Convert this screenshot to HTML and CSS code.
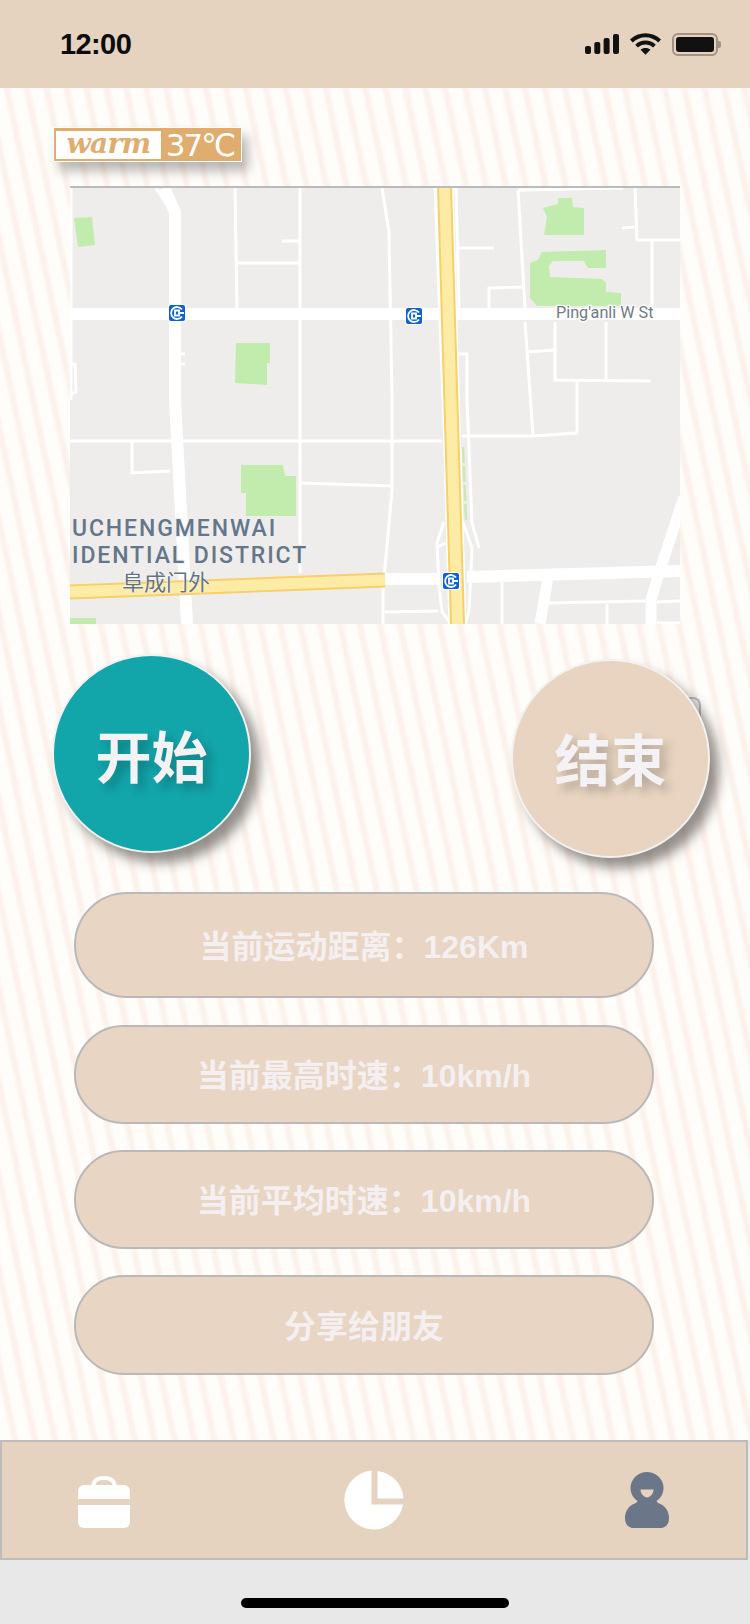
FILE: index.html
```html
<!DOCTYPE html>
<html lang="zh-CN">
<head>
<meta charset="utf-8">
<title>warm37°C</title>
<link rel="stylesheet" href="styles.css">
</head>
<body>
<div class="screen">
  <header class="status">
    <span class="time">12:00</span>
    <div class="status-icons">
      <svg class="ic-signal" viewBox="0 0 34 20"><rect x="0" y="12" width="6" height="8" rx="2"/><rect x="9.3" y="8" width="6" height="12" rx="2"/><rect x="18.6" y="4" width="6" height="16" rx="2"/><rect x="28" y="0" width="6" height="20" rx="2"/></svg>
      <svg class="ic-wifi" viewBox="0 0 32 22"><path d="M16 0C10 0 4.500 2.300 0 6.400L2.800 9.500C6.400 6.100 11 4.100 16 4.100S25.600 6.100 29.200 9.500L32 6.400C27.500 2.300 22 0 16 0Z"/><path d="M16 7.400C12 7.400 8.400 8.900 5.400 11.700L8.200 14.700C10.300 12.800 13 11.600 16 11.600S21.700 12.800 23.800 14.700L26.600 11.700C23.600 8.900 20 7.400 16 7.400Z"/><path d="M16 15C14 15 12.300 15.700 10.900 16.900L16 22L21.100 16.900C19.700 15.700 18 15 16 15Z"/></svg>
      <div class="battery"><div class="battery-fill"></div></div>
    </div>
  </header>

  <main class="main">
    <div class="logo"><span class="logo-warm">warm</span><span class="logo-temp">37℃</span></div>

    <svg class="map" viewBox="70 188 610 436">
      <rect class="m-bg" x="70" y="186" width="610" height="438"/>
      <g class="m-park">
        <polygon points="74,218 92,217 95,245 78,247"/>
        <polygon points="236,343 270,343 270,363 267,363 267,385 235,383"/>
        <polygon points="558,198 572,198 573,207 584,208 584,235 544,235 547,217 543,208 558,204"/>
        <polygon points="542,252 606,250 606,268 588,268 584,261 553,261 549,266 550,277 602,279 606,283 606,292 621,293 621,306 537,306 530,298 530,263 538,260"/>
        <polygon points="241,465 283,465 285,476 296,476 296,516 246,516 246,493 241,493"/>
        <rect x="70" y="618" width="26" height="6"/>
      </g>
      <g class="m-dash">
        <path d="M463 447L466 520"/>
      </g>
      <g class="m-road">
        <path d="M71 188V400"/>
        <path d="M70 364H75L76 392L70 394"/>
        <path d="M235 188L237 308"/>
        <path d="M300 188V573"/>
        <path d="M238 263H300"/>
        <path d="M282 241H300"/>
        <path d="M180 354H185M180 364H185"/>
        <path d="M70 441H442"/>
        <path d="M132 441V473L170 471"/>
        <path d="M300 483L392 486"/>
        <path d="M382 188L389 232L392 400V490L383 590V624"/>
        <path d="M435 188L443 400"/>
        <path d="M456 248H494"/>
        <path d="M458 354H467V400L472 523L479 548"/>
        <path d="M456 188L459 308"/>
        <path d="M518 190L525 308"/>
        <path d="M518 190L623 188"/>
        <path d="M635 188L637 240H680"/>
        <path d="M652 241V308"/>
        <path d="M622 228L637 227"/>
        <path d="M489 308V288L523 287"/>
        <path d="M525 322L533 436"/>
        <path d="M527 352L555 350"/>
        <path d="M555 322V380L651 381"/>
        <path d="M606 322V380"/>
        <path d="M577 380V433"/>
        <path d="M462 436H533L577 433"/>
        <path d="M502 581V624"/>
        <path d="M548 603L645 601"/>
        <path d="M607 604V624"/>
        <path d="M657 602L680 601"/>
        <path d="M657 623H680"/>
        <path d="M385 612L438 611"/>
        <path d="M444 522L437 543L439 585L442 612L451 624"/>
        <path d="M463 522L472 548L469 612L465 624"/>
        <path d="M437 547L446 543"/>
        <path d="M156 188L170 210"/>
      </g>
      <g class="m-main">
        <path d="M70 314H680"/>
        <path d="M164 188L175 212L175 400L187 624"/>
        <path d="M385 579L440 579"/>
        <path d="M467 577L680 571"/>
      </g>
      <g class="m-wide">
        <path d="M684 497L661 567L651 600V624"/>
        <path d="M548 577L540 624"/>
      </g>
      <path class="hw-edge" d="M70 592L385 580"/>
      <path class="hw-fill" d="M70 592L385 580"/>
      <path class="hw-halo" d="M444.500 186L457.500 624"/>
      <path class="hw-edge" d="M444.500 186L457.500 624"/>
      <path class="hw-fill" d="M444.500 186L457.500 624"/>

      <g class="metro" transform="translate(177 313)">
        <rect class="mt-bg" x="-9" y="-9" width="18" height="18" rx="3"/>
        <rect class="mt-blue" x="-8" y="-8" width="16" height="16" rx="2"/>
        <path class="mt-ring" d="M5 -3.500A6 6 0 1 0 5 3.500M-2 -2.500H2V2.500H-2ZM2 0H7"/>
      </g>
      <g class="metro" transform="translate(414 316)">
        <rect class="mt-bg" x="-9" y="-9" width="18" height="18" rx="3"/>
        <rect class="mt-blue" x="-8" y="-8" width="16" height="16" rx="2"/>
        <path class="mt-ring" d="M5 -3.500A6 6 0 1 0 5 3.500M-2 -2.500H2V2.500H-2ZM2 0H7"/>
      </g>
      <g class="metro" transform="translate(451 581)">
        <rect class="mt-bg" x="-9" y="-9" width="18" height="18" rx="3"/>
        <rect class="mt-blue" x="-8" y="-8" width="16" height="16" rx="2"/>
        <path class="mt-ring" d="M5 -3.500A6 6 0 1 0 5 3.500M-2 -2.500H2V2.500H-2ZM2 0H7"/>
      </g>

      <text class="m-label-road" x="556" y="318">Ping'anli W St</text>
      <text class="m-label-dist" x="72" y="536">UCHENGMENWAI</text>
      <text class="m-label-dist" x="72" y="563">IDENTIAL DISTRICT</text>
      <text class="m-label-cn" x="122" y="590">阜成门外</text>
    </svg>

    <div class="actions">
      <button class="round round-start">开始</button>
      <div class="end-wrap">
        <div class="behind"></div>
        <button class="round round-end">结束</button>
      </div>
    </div>

    <div class="pills">
      <div class="pill pill-a">当前运动距离：126Km</div>
      <div class="pill pill-b">当前最高时速：10km/h</div>
      <div class="pill pill-b">当前平均时速：10km/h</div>
      <div class="pill pill-c">分享给朋友</div>
    </div>
  </main>

  <nav class="tabs">
    <svg class="tab-bag" viewBox="0 0 52 52">
      <path class="bag-handle" d="M15.500 10V9.500C15.500 4.800 19.500 2 26 2S36.500 4.800 36.500 9.500V10"/>
      <path class="tab-white" d="M6 9H46A6 6 0 0 1 52 15V23H0V15A6 6 0 0 1 6 9Z"/>
      <path class="tab-white" d="M0 29H52V46A6 6 0 0 1 46 52H6A6 6 0 0 1 0 46Z"/>
    </svg>
    <svg class="tab-pie" viewBox="0 0 60 60">
      <path class="tab-white" d="M27.500 0.500A29.500 29.500 0 1 0 59 34.500H27.500Z"/>
      <path class="tab-white" d="M33.500 1A29.500 29.500 0 0 1 59.500 28.500H33.500Z"/>
    </svg>
    <svg class="tab-user" viewBox="0 0 44 56">
      <ellipse class="user-fill" cx="22" cy="16" rx="16.500" ry="16"/>
      <path class="user-fill" d="M15 26H29L33 31C40 33 44 39 44 46C44 53 40 56 35 56H9C4 56 0 53 0 46C0 39 4 33 11 31Z"/>
      <path class="user-notch" d="M15.500 17.500H28.500C28.500 22 25 25 22 25.500C19 25 15.500 22 15.500 17.500Z"/>
    </svg>
  </nav>

  <footer class="home"><div class="home-bar"></div></footer>
</div>
</body>
</html>
```
FILE: styles.css
```css
* { box-sizing: border-box; }
html, body { margin: 0; padding: 0; }
body { font-family: "Liberation Sans", "Noto Sans CJK SC", sans-serif; }

.screen {
  width: 750px;
  height: 1624px;
  display: flex;
  flex-direction: column;
  overflow: hidden;
  background: #e8e8e8;
}

/* status bar */
.status {
  height: 88px;
  flex: none;
  background: #e6d3bf;
  display: flex;
  justify-content: space-between;
  align-items: center;
  padding: 0 30px 0 60px;
}
.time { font-size: 29px; font-weight: 700; letter-spacing: -.6px; color: #0c0c0c; }
.status-icons { display: flex; align-items: center; gap: 11px; }
.ic-signal { width: 34px; height: 20px; fill: #111; }
.ic-wifi { width: 31px; height: 22px; fill: #111; }
.battery {
  width: 46px;
  height: 23px;
  margin-right: 2px;
  border: 2px solid #a39384;
  border-radius: 6px;
  padding: 2px;
  position: relative;
}
.battery::after {
  content: "";
  position: absolute;
  right: -5px;
  top: 6px;
  width: 3px;
  height: 7px;
  border-radius: 0 2px 2px 0;
  background: #a39384;
}
.battery-fill { width: 100%; height: 100%; background: #111; border-radius: 3px; }

/* striped page */
.main {
  flex: none;
  height: 1352px;
  background:
    repeating-linear-gradient(78deg,
      #fffdf9 0, #fffdf9 10px,
      #fcf2eb 13px, #fcf2eb 16px,
      #fffdf9 19.500px);
  overflow: hidden;
}

/* logo */
.logo {
  width: 189px;
  height: 35px;
  margin: 39px 0 0 53px;
  display: flex;
  align-items: center;
  padding: 2px 2px;
  background: #e0ad6e;
  border: 1px solid #fff;
  box-shadow: 6px 9px 12px rgba(0, 0, 0, .28);
}
.logo-warm {
  width: 105px;
  height: 28px;
  flex: none;
  background: #fff;
  color: #e0ad6e;
  font-family: "DejaVu Serif", serif;
  font-style: italic;
  font-weight: 700;
  font-size: 28px;
  line-height: 25px;
  letter-spacing: -.6px;
  text-align: center;
}
.logo-temp {
  flex: 1;
  color: #fff;
  font-family: "DejaVu Sans", sans-serif;
  font-size: 31px;
  line-height: 30px;
  letter-spacing: -2px;
  text-align: center;
  white-space: nowrap;
}

/* map */
.map {
  display: block;
  width: 610px;
  height: 438px;
  margin: 24px 0 0 70px;
  border-top: 2px solid #bbb;
}
.m-bg { fill: #eeedeb; }
.m-park polygon, .m-park rect { fill: #c1ecae; }
.m-dash path { fill: none; stroke: #c9eab8; stroke-width: 2.500; stroke-dasharray: 16 3; }
.m-road path { fill: none; stroke: #fff; stroke-width: 3; }
.m-main path { fill: none; stroke: #fff; stroke-width: 12; }
.m-wide path { fill: none; stroke: #fff; stroke-width: 11; }
.hw-halo { fill: none; stroke: #fff; stroke-width: 18; }
.hw-edge { fill: none; stroke: #f9cf69; stroke-width: 15; }
.hw-fill { fill: none; stroke: #feeca6; stroke-width: 11; }
.mt-bg { fill: #fff; }
.mt-blue { fill: #0b62d6; }
.mt-ring { fill: none; stroke: #fff; stroke-width: 1.800; }
.m-label-road {
  font-family: Roboto, sans-serif;
  font-size: 16.200px;
  fill: #6f7a84;
  stroke: #fff;
  stroke-width: 2.500px;
  paint-order: stroke;
}
.m-label-dist {
  font-family: Roboto, sans-serif;
  font-size: 23px;
  font-weight: 500;
  letter-spacing: 1.900px;
  fill: #64768c;
  stroke: #eeedeb;
  stroke-width: 2px;
  paint-order: stroke;
}
.m-label-cn {
  font-family: "Noto Sans CJK SC", sans-serif;
  font-size: 22px;
  font-weight: 400;
  fill: #66727f;
  stroke: #fff;
  stroke-width: 1px;
  paint-order: stroke;
}

/* round buttons */
.actions {
  display: flex;
  justify-content: space-between;
  align-items: flex-start;
  margin-top: 30px;
  padding: 0 40px 0 52px;
}
.round {
  display: block;
  width: 199px;
  height: 199px;
  padding: 0;
  border: 2px solid #f2f2f2;
  border-radius: 50%;
  box-shadow: 9px 10px 12px rgba(60, 55, 50, .55);
  font-family: "Noto Sans CJK SC", sans-serif;
  font-size: 56px;
  font-weight: 700;
  color: #f4f2f5;
  text-shadow: 6px 6px 10px rgba(0, 0, 0, .22);
}
.round-start { background: #12a5aa; }
.round-end { background: #e8d4c0; position: relative; padding-bottom: 5px; }
.end-wrap { position: relative; margin-top: 5px; }
.behind {
  position: absolute;
  left: 176px;
  top: 38px;
  width: 14px;
  height: 20px;
  background: #f2f0ee;
  border: 2px solid #b9bcc0;
  border-radius: 0 8px 0 0;
}

/* pills */
.pills {
  display: flex;
  flex-direction: column;
  margin: 34px 0 0 74px;
  width: 580px;
}
.pill {
  display: flex;
  align-items: center;
  justify-content: center;
  background: #e9d5c3;
  border: 2px solid #b9b9b9;
  border-radius: 53px;
  color: #f4eff0;
  font-size: 32px;
  font-weight: 700;
  white-space: nowrap;
  padding-bottom: 3px;
}
.pill-a { height: 106px; margin-bottom: 27px; }
.pill-b { height: 99px; margin-bottom: 26px; }
.pill-c { height: 100px; }

/* tab bar */
.tabs {
  height: 120px;
  width: 748px;
  flex: none;
  background: #e6d3bf;
  border: 2px solid #bcbcbc;
  position: relative;
  display: flex;
  align-items: center;
  padding: 0 78px 0 76px;
  justify-content: space-between;
}
.tab-white { fill: #fff; }
.tab-bag { width: 52px; height: 52px; margin-top: 4px; }
.bag-handle { fill: none; stroke: #fff; stroke-width: 4; }
.tab-pie { width: 60px; height: 60px; margin: -1px 7px 0 0; }
.tab-user { width: 44px; height: 56px; margin-right: -1px; filter: blur(.5px); }
.user-fill { fill: #6c7689; }
.user-notch { fill: #e6d3bf; }

/* home indicator */
.home {
  flex: none;
  height: 64px;
  display: flex;
  justify-content: center;
  align-items: flex-start;
  padding-top: 38px;
}
.home-bar { width: 268px; height: 10px; border-radius: 5px; background: #000; }
```
